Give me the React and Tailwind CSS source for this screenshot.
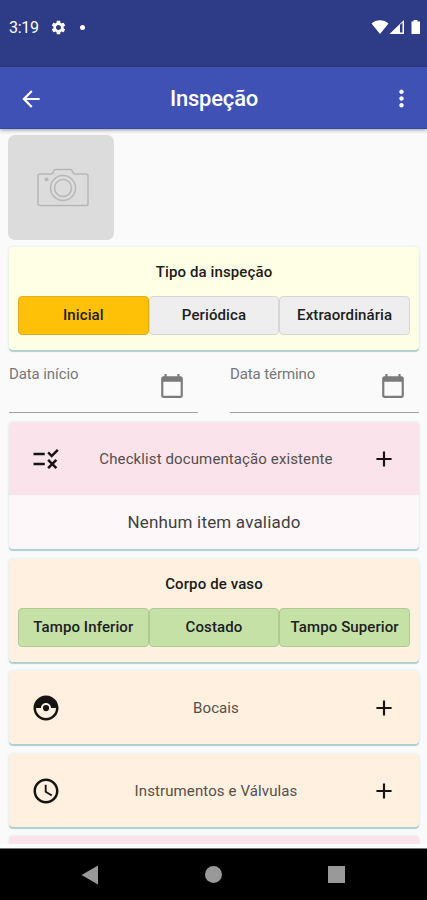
import {
  MdSettings,
  MdArrowBack,
  MdMoreVert,
  MdRule,
  MdAdd,
  MdCatchingPokemon,
  MdAccessTime,
  MdCalendarToday,
} from 'react-icons/md';

const cardShadow = 'shadow-[0_2px_1px_#acd0d2,0_0_3px_#d5e7ea]';

const StatusBar = () => (
  <div className="h-[67px] shrink-0 bg-[#2e3c87] flex items-start justify-between pt-[18px] pl-[9px] pr-[6px] text-white">
    <div className="flex items-center h-5">
      <span className="w-[31px] text-base leading-5 whitespace-nowrap tracking-[-0.3px]">3:19</span>
      <MdSettings className="w-[17px] h-[17px] ml-[10px] -mt-px" />
      <span className="w-[5px] h-[5px] rounded-full bg-white ml-[13px] -mt-px" />
    </div>
    <svg className="mt-px" width="50" height="16" viewBox="0 0 50 16" fill="#fff">
      <path d="M0.5 4.500C5 0 13 0 17.500 4.500L9 15Z" />
      <path fillRule="evenodd" d="M18.500 15H33V1ZM29 5.800L31.500 3.800V13.500H29Z" />
      <path d="M42.500 1H46.500V2.500H49V15H40.500V2.500H42.500Z" />
    </svg>
  </div>
);

const AppBar = () => (
  <header className="relative z-10 h-[62px] shrink-0 bg-[#3f51b5] border-b border-[#3347aa] shadow-[0_1px_4px_rgba(0,0,0,0.4)] flex items-center justify-between pt-[2px] pl-[18px] pr-[12px] text-white">
    <MdArrowBack className="w-[26px] h-[26px]" />
    <h1 className="text-[22px] leading-7 font-medium tracking-[-0.2px] pr-[4px]">Inspeção</h1>
    <MdMoreVert className="w-[27px] h-[27px]" />
  </header>
);

const ButtonGroup = ({ title, items, bg }) => (
  <section className={`rounded-[4px] h-[103px] px-[9px] pt-[15px] ${bg} ${cardShadow}`}>
    <h2 className="text-center text-[15px] leading-5 font-medium text-[#1c1b18] tracking-[0.12px]">{title}</h2>
    <div className="grid grid-cols-3 mt-[14px]">
      {items.map((item) => (
        <button
          key={item.label}
          className={`h-[39px] rounded-[4px] border text-[15px] font-medium whitespace-nowrap tracking-[0.1px] text-[#20201d] ${item.style}`}
        >
          {item.label}
        </button>
      ))}
    </div>
  </section>
);

const DateField = ({ label }) => (
  <div className="w-[189px] h-[52px] flex justify-between border-b border-[#a0a0a0] pr-[13px]">
    <span className="text-[15px] leading-5 mt-[3px] text-[#777] tracking-[-0.1px]">{label}</span>
    <MdCalendarToday className="w-[26px] h-[26px] mt-[12px] text-[#7b7b7b]" />
  </div>
);

const SectionHeader = ({ icon: Icon, label }) => (
  <div className="h-[73px] flex items-center pt-px pl-[22px] pr-[22px] text-[#161412]">
    <Icon className="w-[30px] h-[30px]" />
    <span className="flex-1 text-center text-[15px] text-[#554f4b] tracking-[0.11px]">{label}</span>
    <MdAdd className="w-[26px] h-[26px]" />
  </div>
);

const gray = 'bg-[#eeeeee] border-[#d6d6d6]';
const green = 'bg-[#c5e1a5] border-[#afcb91]';

const App = () => {
  return (
    <div className="w-full h-[900px] overflow-hidden flex flex-col bg-[#fafafa] font-['Roboto',sans-serif]">
      <StatusBar />
      <AppBar />

      <main className="h-[715px] shrink-0 overflow-hidden px-2 pt-[6px]">
        {/* Photo placeholder */}
        <div className="w-[106px] h-[105px] rounded-[7px] bg-[#dcdcdc] flex items-center justify-center">
          <svg className="ml-1" width="52" height="40" viewBox="0 0 52 40" fill="none" stroke="#b7b7b7" strokeWidth="1.5">
            <path d="M3 6H14Q16 6 17 2.500Q17.500 1.500 19 1.500H33Q34.500 1.500 35 2.500Q36 6 38 6H49Q51 6 51 8V35.500Q51 37.500 49 37.500H3Q1 37.500 1 35.500V8Q1 6 3 6Z" />
            <circle cx="26" cy="20" r="12.500" />
            <circle cx="26" cy="20" r="8.500" />
            <circle cx="9.500" cy="11.500" r="2" fill="#b7b7b7" stroke="none" />
          </svg>
        </div>

        <div className="pl-px">
          <div className="mt-[7px]">
            <ButtonGroup
              title="Tipo da inspeção"
              bg="bg-[#ffffe5]"
              items={[
                { label: 'Inicial', style: 'bg-[#ffc107] border-[#e1ad1c]' },
                { label: 'Periódica', style: gray },
                { label: 'Extraordinária', style: gray },
              ]}
            />
          </div>

          <div className="flex justify-between mt-[11px]">
            <DateField label="Data início" />
            <DateField label="Data término" />
          </div>

          <section className={`mt-[9px] h-[127px] rounded-[4px] overflow-hidden bg-[#fef7fa] ${cardShadow}`}>
            <div className="bg-[#fae3eb]">
              <SectionHeader icon={MdRule} label="Checklist documentação existente" />
            </div>
            <p className="text-center text-[17px] leading-[54px] tracking-[0.18px] text-[#414141]">Nenhum item avaliado</p>
          </section>

          <div className="mt-[10px]">
            <ButtonGroup
              title="Corpo de vaso"
              bg="bg-[#fff0df]"
              items={[
                { label: 'Tampo Inferior', style: green },
                { label: 'Costado', style: green },
                { label: 'Tampo Superior', style: green },
              ]}
            />
          </div>

          <section className={`mt-[9px] rounded-[4px] bg-[#fff0df] ${cardShadow}`}>
            <SectionHeader icon={MdCatchingPokemon} label="Bocais" />
          </section>
          <section className={`mt-[10px] rounded-[4px] bg-[#fff0df] ${cardShadow}`}>
            <SectionHeader icon={MdAccessTime} label="Instrumentos e Válvulas" />
          </section>
          <section className="mt-[9px] rounded-t-[4px] h-[73px] bg-[#fae3eb] shadow-[0_0_3px_#d5e7ea]" />
        </div>
      </main>

      <div className="h-[5px] shrink-0 bg-white border-b border-[#777]" />

      {/* System navigation */}
      <nav className="flex-1 bg-black flex items-center justify-between pl-[81px] pr-[82px]">
        <svg width="18" height="20" viewBox="0 0 18 20" fill="#999">
          <path d="M0.500 10L17 0.500V19.500Z" />
        </svg>
        <span className="w-[17px] h-[17px] rounded-full bg-[#999]" />
        <span className="w-[17px] h-[17px] bg-[#999]" />
      </nav>
    </div>
  );
};

export default App;
